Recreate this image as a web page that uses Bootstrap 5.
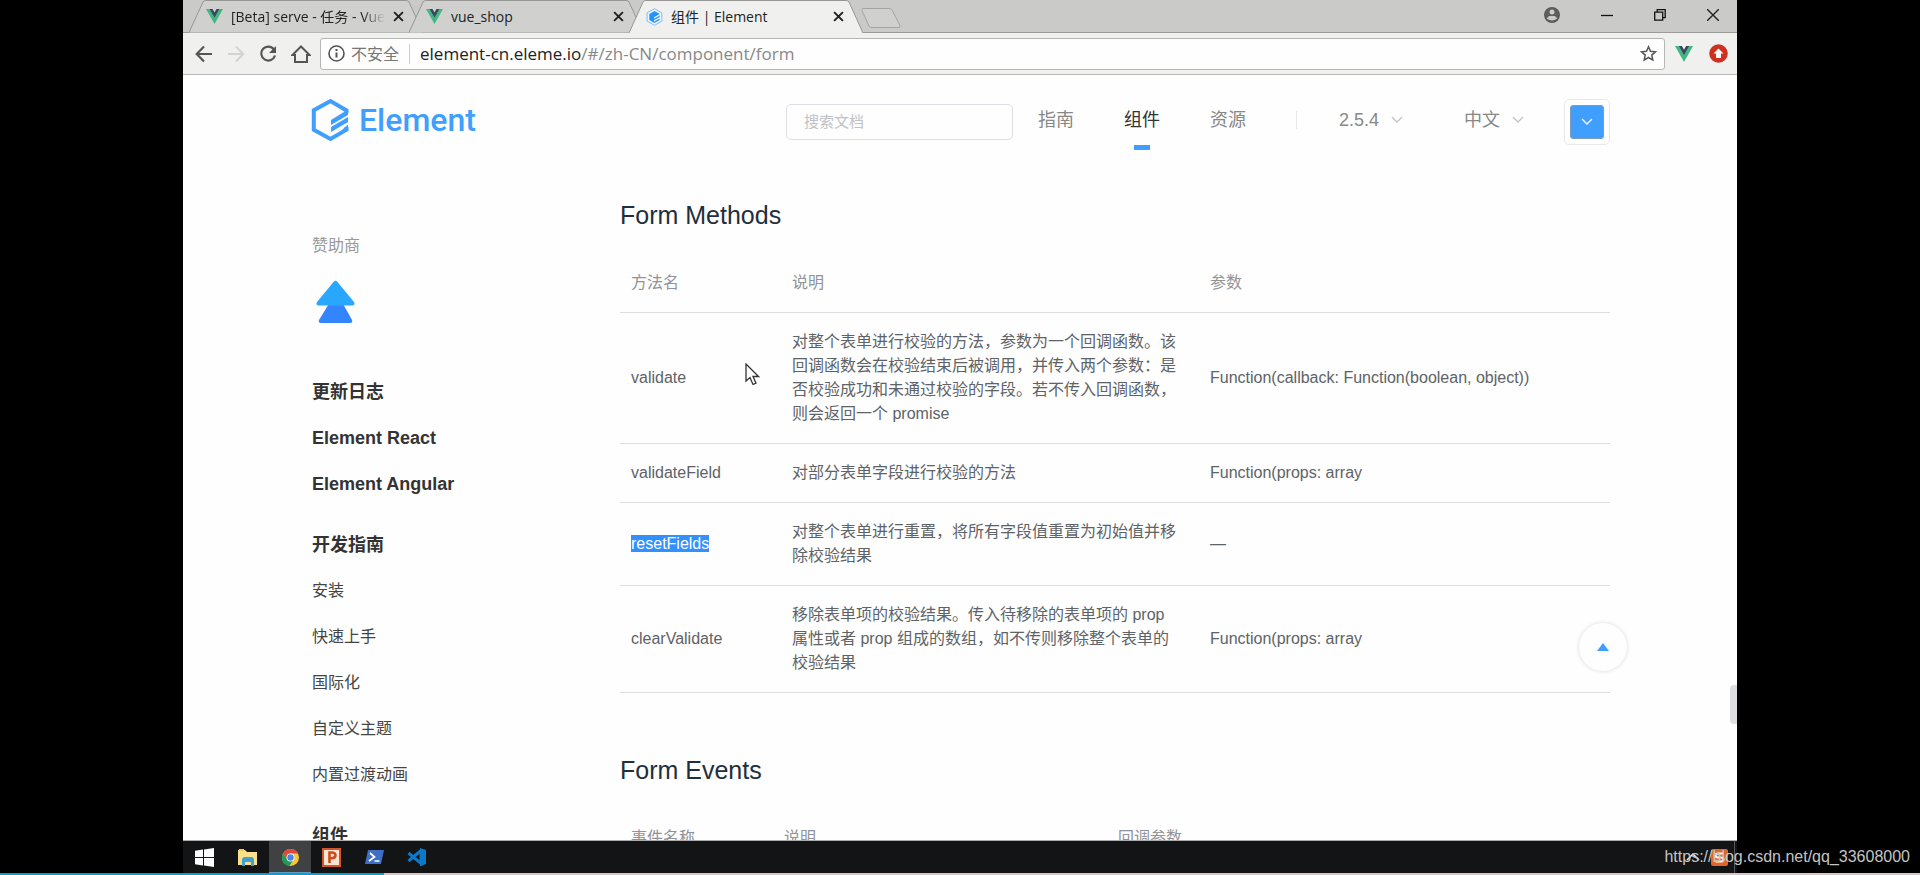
<!DOCTYPE html>
<html lang="zh-CN">
<head>
<meta charset="utf-8">
<meta name="viewport" content="width=device-width, initial-scale=1">
<title>组件 | Element</title>
<link href="https://cdn.jsdelivr.net/npm/bootstrap@5.3.0/dist/css/bootstrap.min.css" rel="stylesheet">
<style>
body { font-family: "Liberation Sans", "Noto Sans CJK SC", sans-serif; font-size: 16px; line-height: 24px; color: #5e6368; background: #000; }
button { border: 0; background: none; padding: 0; color: inherit; }
svg { display: block; flex: none; }
a { color: inherit; text-decoration: none; }
.screen { height: 100vh; }
.desktop { margin: 0 183px; min-height: 0; background: #fdfefd; }
.chrome-ui { font-family: "Open Sans", "Noto Sans CJK SC", sans-serif; }

/* tab strip */
.strip { height: 33px; background: #cacbc9; border-bottom: 1px solid #9b9c9a; padding-left: 6px; }
.tab { width: 234px; height: 33px; margin-right: -14px; padding: 0 19px 0 17px; font-size: 14px; color: #222; }
.tab-shape { position: absolute; inset: 0; width: 100%; height: 33px; }
.tab-label { flex: 1; overflow: hidden; white-space: nowrap; text-align: left; margin-left: 8px; }
.tab-fade { -webkit-mask-image: linear-gradient(90deg, #000 85%, transparent); mask-image: linear-gradient(90deg, #000 85%, transparent); }
.win-controls { gap: 33px; padding: 0 18px 3px 0; }

/* address bar */
.toolbar { height: 42px; background: #f0f1ef; border-bottom: 1px solid #b9bab8; padding: 0 9px 0 12px; }
.nav-icons { gap: 14px; }
.omnibox { height: 32px; background: #fdfefd; border: 1px solid #b6b7b5; border-radius: 3px; margin: 0 10px 0 9px; padding: 0 7px; }
.unsafe { font-size: 16px; color: #777; border-right: 1px solid #ccc; line-height: 20px; padding-right: 10px; margin: 0 10px 0 6px; }
.url { font-size: 17px; color: #888; }
.url-host { color: #222; }

/* page */
.page { flex: 1 1 0; min-height: 0; overflow: hidden; }
.site-head { height: 90px; padding: 0 127px 0 128px; }
.brand { color: #409eff; gap: 9px; font: 500 32px/36px Roboto, sans-serif; }
.search { width: 227px; height: 36px; border: 1px solid #dcdfe6; border-radius: 5px; padding: 0 17px; font-size: 15px; background: transparent; margin: 3px 25px 0 0; }
.search::placeholder { color: #bfc2c8; }
.top-nav { font-size: 18px; color: #888; }
.top-nav a { margin-right: 50px; }
.top-nav .current { color: #333; }
.top-nav .current::after { content: ""; position: absolute; left: 50%; bottom: -18px; width: 16px; height: 5px; margin-left: -8px; background: #409eff; }
.rule { width: 1px; height: 18px; background: #e8eaec; margin-right: 42px; }
.pick-version { margin-right: 61px; }
.theme { width: 46px; height: 46px; border: 1px solid #e6e8ea; border-radius: 5px; margin: 3px 0 0 40px; }
.theme span { width: 34px; height: 34px; background: #409eff; border: 1px solid #7e9cc0; border-radius: 3px; }
.docs { padding: 0 127px 0 129px; }
.side { width: 308px; flex: none; padding-top: 58px; }
.side a, .side h2 { display: block; line-height: 46px; margin: 0; color: #444; }
.side .major { font-size: 18px; font-weight: 700; color: #333; }
.side .group { margin-top: 15px; }
.sponsor { line-height: 46px; color: #999; }
.tree { margin: 11px 0 44px 4px; }
.doc-body { min-width: 0; padding-top: 34px; }
.doc-body h3 { font-size: 25px; line-height: 32px; font-weight: 400; color: #1f2f3d; margin: 0 0 23px; }
.api { width: 100%; table-layout: fixed; margin-bottom: 61px; }
.api th, .api td { padding: 17px 20px 17px 11px; border-bottom: 1px solid #dcdfe1; line-height: 24px; vertical-align: middle; }
.api th { font-weight: 400; color: #909399; }
.picked { background: #3390ff; color: #fff; }
.c1 { width: 161px; } .c2 { width: 418px; } .e1 { width: 153px; } .e2 { width: 334px; }
.pointer { position: absolute; left: 125px; top: 50px; }
.to-top { position: absolute; right: 110px; bottom: 169px; width: 48px; height: 48px; border-radius: 50%; background: #fdfefd; box-shadow: 0 0 4px rgba(0,0,0,.15); }
.thumb { position: absolute; right: 0; bottom: 116px; width: 7px; height: 39px; border-radius: 4px 0 0 4px; background: #dddedf; }

/* taskbar */
.taskbar { height: 33px; background: #131416; border-top: 1px solid #aaa; }
.task { width: 42px; height: 32px; display: flex; align-items: center; justify-content: center; }
.task.active { background: #404142; box-shadow: inset 0 -1px #5f9cc4; }
.start { margin-right: 2px; }
.tray { padding-right: 2px; gap: 11px; }
.tray-end { width: 1px; height: 32px; background: #55565a; margin-left: -5px; }
.progress-line { height: 2px; background: #d9c4c6; }
.played { width: 20%; height: 2px; background: #00a1d6; }
.watermark { position: absolute; right: 10px; bottom: 6px; color: #c4c4c4; }
</style>
</head>
<body>
<svg width="0" height="0" class="position-absolute">
  <symbol id="vue" viewBox="0 0 17 15"><path d="M0 0h3.500l5 8.500 5-8.500H17L8.500 15z" fill="#41b883"/><path d="M3.500 0h3l2 3.500 2-3.500h3l-5 8.700z" fill="#35495e"/></symbol>
  <symbol id="cross" viewBox="0 0 10 10"><path d="M1 1l8 8M9 1L1 9" stroke="#222" stroke-width="1.800"/></symbol>
  <symbol id="chev" viewBox="0 0 12 8"><path d="M1 1l5 5 5-5" fill="none" stroke="currentColor" stroke-width="1.300"/></symbol>
</svg>
<div class="screen d-flex flex-column position-relative">
  <div class="desktop d-flex flex-column flex-grow-1">
    <div class="strip d-flex flex-shrink-0 chrome-ui">
      <button class="tab position-relative d-flex align-items-center">
        <svg class="tab-shape" viewBox="0 0 234 33" preserveAspectRatio="none"><path d="M0 32.500L14 2q1-1.500 3-1.500h200q2 0 3 1.500l14 30.500" fill="#d0d1cf" stroke="#969795"/></svg>
        <svg class="position-relative" width="17" height="15"><use href="#vue"/></svg>
        <span class="tab-label tab-fade position-relative">[Beta] serve - 任务 - Vue</span>
        <svg class="position-relative ms-2" width="11" height="11"><use href="#cross"/></svg>
      </button>
      <button class="tab position-relative d-flex align-items-center">
        <svg class="tab-shape" viewBox="0 0 234 33" preserveAspectRatio="none"><path d="M0 32.500L14 2q1-1.500 3-1.500h200q2 0 3 1.500l14 30.500" fill="#d0d1cf" stroke="#969795"/></svg>
        <svg class="position-relative" width="17" height="15"><use href="#vue"/></svg>
        <span class="tab-label position-relative">vue_shop</span>
        <svg class="position-relative ms-2" width="11" height="11"><use href="#cross"/></svg>
      </button>
      <button class="tab position-relative d-flex align-items-center">
        <svg class="tab-shape" viewBox="0 0 234 33" preserveAspectRatio="none"><path d="M0 33L14 2q1-1.500 3-1.500h200q2 0 3 1.500l14 31" fill="#f0f1ef" stroke="#969795"/></svg>
        <svg class="position-relative" width="17" height="18" viewBox="0 0 17 18"><path d="M8.500.7l7.400 4.200v8.200l-7.400 4.200-7.400-4.200V4.900z" fill="#eef6ff" stroke="#7abdff"/><path d="M8.500 3l5.200 3-5.700 3.300v1.500l5.700-3.300V9L8 12.300v1.500l5.700-3.200V12l-5.200 3-5.200-3V6z" fill="#2492fb"/></svg>
        <span class="tab-label position-relative">组件 | Element</span>
        <svg class="position-relative ms-2" width="11" height="11"><use href="#cross"/></svg>
      </button>
      <button class="ms-2 ps-1 pt-1 align-self-center" aria-label="新标签页"><svg width="40" height="20" viewBox="0 0 40 20"><path d="M2 .5h26q2 0 3 1.500l8 15.500q.5 2-1 2H11q-2 0-3-1.500L1 2.500Q.5.5 2 .5z" fill="#d0d1cf" stroke="#a5a6a4"/></svg></button>
      <div class="win-controls d-flex align-items-center ms-auto">
        <button aria-label="用户"><svg width="16" height="16" viewBox="0 0 16 16"><circle cx="8" cy="8" r="8" fill="#5c5d5c"/><circle cx="8" cy="5" r="2.500" fill="#cacbc9"/><path d="M2.800 11.500a6 6 0 0 1 10.400 0q-5.200 4-10.400 0z" fill="#cacbc9"/><path d="M3 8.500h10" stroke="#5c5d5c"/></svg></button>
        <button class="ms-2" aria-label="最小化"><svg width="12" height="12"><path d="M0 6.500h12" stroke="#111" stroke-width="1.300"/></svg></button>
        <button class="ms-2" aria-label="还原"><svg width="12" height="12" viewBox="0 0 12 12"><path d="M.7 3.200h8v8h-8zM3.200 3V.7h8v8H9" fill="none" stroke="#111" stroke-width="1.300"/></svg></button>
        <button class="ms-2" aria-label="关闭"><svg width="12" height="12"><path d="M0 0l12 12M12 0L0 12" stroke="#222" stroke-width="1.400"/></svg></button>
      </div>
    </div>

    <div class="toolbar d-flex flex-shrink-0 align-items-center chrome-ui">
      <div class="nav-icons d-flex align-items-center">
        <button aria-label="后退"><svg width="18" height="18" viewBox="0 0 18 18"><path d="M17 9H2M9 1.500L1.700 9 9 16.500" fill="none" stroke="#555" stroke-width="2.200"/></svg></button>
        <button aria-label="前进"><svg width="18" height="18" viewBox="0 0 18 18"><path d="M1 9h15M9 1.500L16.300 9 9 16.500" fill="none" stroke="#d3d4d2" stroke-width="2"/></svg></button>
        <button aria-label="刷新"><svg width="18" height="18" viewBox="0 0 18 18"><path d="M15 4.500A7 7 0 1 0 16 10.500" fill="none" stroke="#555" stroke-width="2.200"/><path d="M17 1v7h-7z" fill="#555"/></svg></button>
        <button aria-label="主页"><svg width="20" height="18" viewBox="0 0 20 18"><path d="M1.500 10L10 1.500l8.500 8.500H16v7H4v-7z" fill="none" stroke="#555" stroke-width="2"/></svg></button>
      </div>
      <div class="omnibox d-flex align-items-center flex-grow-1">
        <svg width="17" height="17" viewBox="0 0 17 17"><circle cx="8.500" cy="8.500" r="7.500" fill="none" stroke="#555" stroke-width="1.600"/><path d="M8.500 7.500v5M8.500 4v2" stroke="#555" stroke-width="2"/></svg>
        <span class="unsafe">不安全</span>
        <a class="url flex-grow-1" href="#/zh-CN/component/form"><span class="url-host">element-cn.eleme.io</span>/#/zh-CN/component/form</a>
        <svg width="17" height="17" viewBox="0 0 17 17"><path d="M8.500 1.800l2 4.500 5 .5-3.700 3.300 1 5-4.300-2.600-4.300 2.600 1-5L1.500 6.800l5-.5z" fill="none" stroke="#555" stroke-width="1.500"/></svg>
      </div>
      <svg width="18" height="16"><use href="#vue"/></svg>
      <svg class="ms-3" width="19" height="19" viewBox="0 0 19 19"><circle cx="9.500" cy="9.500" r="9.300" fill="#d0301f"/><path d="M9.500 4.500l5 5h-2.500V14H7V9.500H4.500z" fill="#fff"/></svg>
    </div>

    <div class="page position-relative">
      <header class="site-head d-flex align-items-center">
        <a class="brand d-flex align-items-center" href="#/">
          <svg width="39" height="44" viewBox="0 0 39 44"><path d="M35.500 15v-2.500L19.500 3 2.800 12.300v19.400L19.500 41l16-9.300V29" fill="none" stroke="#409eff" stroke-width="4"/><path d="M37 11.500v5.500L20 27v-5zM37 19v5L20 34v-5zM37 26.500V33l-6-1z" fill="#409eff"/></svg>
          <span>Element</span>
        </a>
        <input class="search ms-auto" type="text" placeholder="搜索文档" aria-label="搜索文档">
        <nav class="top-nav d-flex align-items-center">
          <a href="#/guide">指南</a>
          <a class="current position-relative" href="#/component">组件</a>
          <a href="#/resource">资源</a>
          <span class="rule"></span>
          <button class="pick-version d-flex align-items-center gap-2">2.5.4 <svg class="ms-1 opacity-50" width="12" height="8"><use href="#chev"/></svg></button>
          <button class="d-flex align-items-center gap-2">中文 <svg class="ms-1 opacity-50" width="12" height="8"><use href="#chev"/></svg></button>
        </nav>
        <button class="theme d-flex align-items-center justify-content-center" aria-label="主题色"><span class="d-flex align-items-center justify-content-center text-white"><svg width="12" height="8"><use href="#chev"/></svg></span></button>
      </header>

      <div class="docs d-flex">
        <aside class="side">
          <div class="sponsor">赞助商</div>
          <svg class="tree" width="40" height="45" viewBox="0 0 40 45"><path d="M14 22h12l10 18q1 3-2 3H5q-3 0-2-3z" fill="#3385ff"/><path d="M17.500 2q2-2.500 4 0L38 22q1.500 3-1.500 3.500h-34Q-.5 25 1 22z" fill="#29a7ff"/></svg>
          <a class="major" href="#/changelog">更新日志</a>
          <a class="major" href="#/react">Element React</a>
          <a class="major" href="#/angular">Element Angular</a>
          <h2 class="major group">开发指南</h2>
          <a href="#/installation">安装</a>
          <a href="#/quickstart">快速上手</a>
          <a href="#/i18n">国际化</a>
          <a href="#/custom-theme">自定义主题</a>
          <a href="#/transition">内置过渡动画</a>
          <h2 class="major group">组件</h2>
        </aside>
        <main class="doc-body flex-grow-1">
          <h3>Form Methods</h3>
          <table class="api">
            <colgroup><col class="c1"><col class="c2"><col></colgroup>
            <thead><tr><th>方法名</th><th>说明</th><th>参数</th></tr></thead>
            <tbody>
              <tr class="position-relative"><td>validate<svg class="pointer" width="15" height="23" viewBox="0 0 15 23"><path d="M1 1v17l4-3.500 3 7 3-1.300-3-6.700h5.500z" fill="#fff" stroke="#333" stroke-width="1.300"/></svg></td><td>对整个表单进行校验的方法，参数为一个回调函数。该回调函数会在校验结束后被调用，并传入两个参数：是否校验成功和未通过校验的字段。若不传入回调函数，则会返回一个 promise</td><td>Function(callback: Function(boolean, object))</td></tr>
              <tr><td>validateField</td><td>对部分表单字段进行校验的方法</td><td>Function(props: array</td></tr>
              <tr><td><span class="picked">resetFields</span></td><td>对整个表单进行重置，将所有字段值重置为初始值并移除校验结果</td><td>—</td></tr>
              <tr><td>clearValidate</td><td>移除表单项的校验结果。传入待移除的表单项的 prop 属性或者 prop 组成的数组，如不传则移除整个表单的校验结果</td><td>Function(props: array</td></tr>
            </tbody>
          </table>
          <h3>Form Events</h3>
          <table class="api">
            <colgroup><col class="e1"><col class="e2"><col></colgroup>
            <thead><tr><th>事件名称</th><th>说明</th><th>回调参数</th></tr></thead>
          </table>
        </main>
      </div>
      <button class="to-top d-flex align-items-center justify-content-center" aria-label="回到顶部"><svg width="12" height="8"><path d="M6 0l6 8H0z" fill="#409eff"/></svg></button>
      <div class="thumb"></div>
    </div>

    <div class="taskbar d-flex flex-shrink-0 align-items-center">
      <button class="task start" aria-label="开始"><svg width="19" height="19" viewBox="0 0 19 19"><path d="M0 2.800L8 1.600V9H0zM9 1.400L19 0v9H9zM0 10h8v7.400l-8-1.200zM9 10h10v9L9 17.600z" fill="#fff"/></svg></button>
      <button class="task" aria-label="文件"><svg width="20" height="17" viewBox="0 0 20 17"><path d="M0 1h7l2 2h10v13H0z" fill="#fbe08a"/><path d="M1 0h5v2H1z" fill="#f3c94f"/><path d="M4 17V11q0-3 3-3h6q3 0 3 3v6h-3v-4H7v4z" fill="#3d9fd2"/></svg></button>
      <button class="task active" aria-label="Chrome"><svg width="17" height="17" viewBox="0 0 17 17"><circle cx="8.500" cy="8.500" r="8.500" fill="#f5c73b"/><path d="M1.100 4.300A8.500 8.500 0 0 1 16 4.500H8.500L5 10.500z" fill="#dc4a3c"/><path d="M1.100 4.300A8.500 8.500 0 0 0 7.500 17l4-6.500-6 .5z" fill="#1e9b57"/><circle cx="8.500" cy="8.500" r="4" fill="#fff"/><circle cx="8.500" cy="8.500" r="3.200" fill="#4684ee"/></svg></button>
      <button class="task" aria-label="PowerPoint"><svg width="20" height="19" viewBox="0 0 20 19"><path d="M1 1h17v17H1z" fill="#fbe3d6" stroke="#d2562a" stroke-width="2"/><path d="M7.500 15V4.500h2.800q3.200.3 3.200 2.800t-3.200 3H8" fill="none" stroke="#cf4a1a" stroke-width="2.600"/></svg></button>
      <button class="task" aria-label="PowerShell"><svg width="19" height="14" viewBox="0 0 19 14"><path d="M3 0h16l-3 14H0z" fill="#3f6fc5"/><path d="M5 3l4.500 4L4 11M9.500 11h5" fill="none" stroke="#fff" stroke-width="1.700"/></svg></button>
      <button class="task" aria-label="VS Code"><svg width="19" height="18" viewBox="0 0 19 18"><path d="M14 2.500v13L1.500 5M14 2.500L1.500 13" fill="none" stroke="#0b78c8" stroke-width="3"/><path d="M13 0l6 2v14l-6 2z" fill="#0b78c8"/></svg></button>
      <div class="tray d-flex align-items-center ms-auto">
        <svg width="14" height="8"><path d="M1 7l6-6 6 6" fill="none" stroke="#eee" stroke-width="1.500"/></svg>
        <svg width="17" height="17" viewBox="0 0 17 17"><rect width="17" height="17" rx="2" fill="#e0662c"/><path d="M12 4.500H7q-2.500 0-2.500 2T7 8.500h3q2.500 0 2.500 2t-2.500 2H4.500" fill="none" stroke="#fff" stroke-width="2"/></svg>
        <span class="tray-end"></span>
      </div>
    </div>
  </div>
  <div class="progress-line"><div class="played"></div></div>
  <div class="watermark">https://blog.csdn.net/qq_33608000</div>
</div>
<script src="https://cdn.jsdelivr.net/npm/bootstrap@5.3.0/dist/js/bootstrap.bundle.min.js"></script>
</body>
</html>
